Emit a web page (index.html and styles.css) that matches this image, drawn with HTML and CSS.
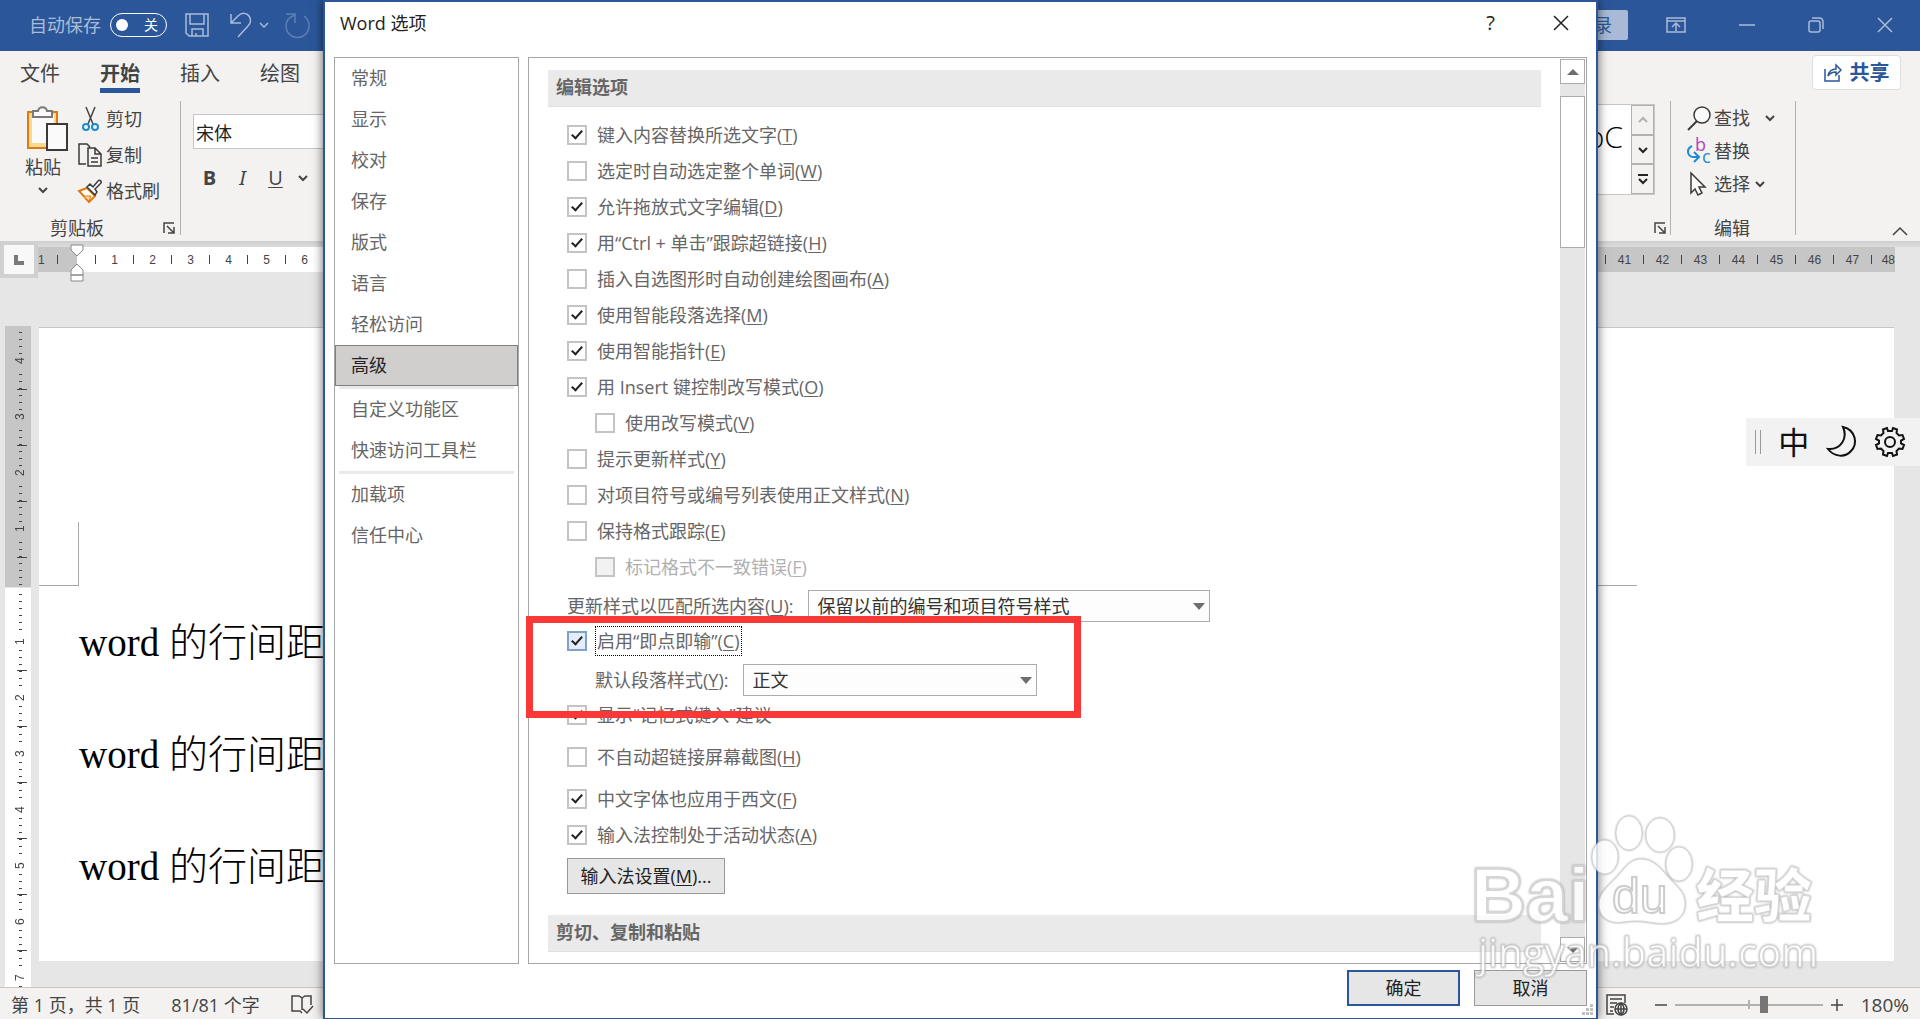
FILE: index.html
```html
<!DOCTYPE html>
<html lang="zh-CN">
	<head>
		<meta charset="utf-8">
		<title>Word 选项</title>
		<link rel="stylesheet" href="styles.css">
	</head>

	<body>
		<!-- title bar -->
		<header class="titlebar">
			<div class="quickAccess">
				<span>自动保存</span>
				<button class="toggle" type="button"><i></i>关</button>
				<button type="button" class="save" aria-label="保存">
					<svg width="24" height="24" viewBox="0 0 24 24"><path d="M1 1h22v22H4l-3-3zM5 1v10h14V1M7 23v-7h11v7M11 23v-3"/></svg>
				</button>
				<button type="button" aria-label="撤消">
					<svg width="24" height="26" viewBox="0 0 24 26"><path d="M2 2v9h10M2 11l7-7c4-4 9-3 11 0 2 3 2 7-1 10L9 25"/></svg>
				</button>
				<svg width="10" height="8" viewBox="0 0 10 8"><path d="M1 2l4 4 4-4"/></svg>
				<button type="button" class="redo" aria-label="恢复">
					<svg width="26" height="26" viewBox="0 0 26 26"><path d="M1 2h9v9M10 3C4 5 1 9 1 14a11.500 11.500 0 0 0 23 0c0-4-2-8-5-10"/></svg>
				</button>
			</div>
			<div class="windowButtons">
				<button type="button" class="login">登录</button>
				<button type="button" aria-label="功能区显示选项"><svg width="20" height="16" viewBox="0 0 20 16"><path d="M1 1h18v14H1zM1 4h18M10 14V7M6 10l4-4 4 4"/></svg></button>
				<button type="button" aria-label="最小化"><svg width="16" height="16" viewBox="0 0 16 16"><path d="M0 8h16"/></svg></button>
				<button type="button" aria-label="还原"><svg width="16" height="16" viewBox="0 0 16 16"><path d="M3 4h7q2 0 2 2v7q0 2-2 2H3q-2 0-2-2V6q0-2 2-2zM4 1h7q4 0 4 4v7"/></svg></button>
				<button type="button" aria-label="关闭"><svg width="16" height="16" viewBox="0 0 16 16"><path d="M1 1l14 14M15 1L1 15"/></svg></button>
			</div>
		</header>

		<!-- ribbon -->
		<section class="ribbon">
			<nav class="tabs">
				<a href="#">文件</a>
				<a href="#" class="active">开始</a>
				<a href="#">插入</a>
				<a href="#">绘图</a>
				<button type="button" class="share">
					<svg width="18" height="18" viewBox="0 0 18 18"><path d="M1 5v12h14v-6M4 12c1-5 4-7 8-7V1l5 5-5 5V8c-4 0-6 1-8 4z"/></svg>共享
				</button>
			</nav>
			<div class="groups">
				<div class="group clipboard">
					<div class="groupBody">
						<button type="button" class="paste">
							<svg width="42" height="48" viewBox="0 0 42 48">
								<path d="M2 6h29v36H2z" fill="#f8d990" stroke="#e07a10" stroke-width="2"/>
								<path d="M6 9h22v28H6z" fill="#fafafa" stroke="none"/>
								<path d="M7 11V5h5c1-5 8-5 9 0h5v6z" fill="#fafafa" stroke="#7a7a78" stroke-width="2"/>
								<path d="M21 18h20v26H21z" fill="#fafafa" stroke="#3b3a39" stroke-width="2"/>
							</svg>
							<span>粘贴</span>
							<svg class="chevron" width="10" height="8" viewBox="0 0 10 8"><path d="M1 2l4 4 4-4"/></svg>
						</button>
						<div class="commands">
							<button type="button">
								<svg width="24" height="26" viewBox="0 0 24 26"><path d="M8 1l7 17M17 1L10 18" stroke="#444" stroke-width="1.500"/><circle cx="8" cy="21" r="3" stroke="#1e8bcd" stroke-width="2"/><circle cx="17" cy="21" r="3" stroke="#1e8bcd" stroke-width="2"/></svg>剪切
							</button>
							<button type="button">
								<svg width="24" height="24" viewBox="0 0 24 24"><path d="M8 21H1V1h8l3 3M10 5h7l6 6v12H10zM17 5v6h6M13 15h7M13 19h7" stroke="#3b3a39" stroke-width="1.500"/></svg>复制
							</button>
							<button type="button">
								<svg width="24" height="24" viewBox="0 0 24 24"><path d="M1 12l8-3 8 8-6 6z" fill="#fff" stroke="#e07a10" stroke-width="2"/><path d="M5 17l8 0-2 5z" fill="#f8d990" stroke="#e07a10" stroke-width="1"/><path d="M9 8l3-3 3 3 5-6c2-2 4 1 3 2l-6 6 2 3-2 3z" fill="#fafafa" stroke="#3b3a39" stroke-width="1.500"/></svg>格式刷
							</button>
						</div>
					</div>
					<div class="groupLabel">
						<span>剪贴板</span>
						<svg class="launcher" width="12" height="12" viewBox="0 0 12 12"><path d="M1 11V1h10M4 4l7 7M11 5v6H5"/></svg>
					</div>
				</div>
				<div class="group font">
					<input type="text" value="宋体" aria-label="字体">
					<div class="fontRow">
						<button type="button"><b>B</b></button>
						<button type="button"><i>I</i></button>
						<button type="button"><u>U</u></button>
						<svg class="chevron" width="10" height="8" viewBox="0 0 10 8"><path d="M1 2l4 4 4-4"/></svg>
					</div>
				</div>
				<div class="group styles">
					<div class="gallery">
						<span>AaBbC</span>
						<div class="galleryButtons">
							<button type="button" class="off" aria-label="上"><svg width="10" height="8" viewBox="0 0 10 8"><path d="M1 6l4-4 4 4"/></svg></button>
							<button type="button" aria-label="下"><svg width="10" height="8" viewBox="0 0 10 8"><path d="M1 2l4 4 4-4"/></svg></button>
							<button type="button" aria-label="其他"><svg width="12" height="12" viewBox="0 0 12 12"><path d="M1 2h10M2 6l4 4 4-4"/></svg></button>
						</div>
					</div>
					<div class="groupLabel">
						<svg class="launcher" width="12" height="12" viewBox="0 0 12 12"><path d="M1 11V1h10M4 4l7 7M11 5v6H5"/></svg>
					</div>
				</div>
				<div class="group editing">
					<div class="commands">
						<button type="button" class="find">
							<svg width="24" height="24" viewBox="0 0 24 24"><circle cx="15" cy="9" r="8" fill="#fafafa" stroke="#3b3a39" stroke-width="1.500"/><path d="M10 15l-9 9" stroke="#3b3a39" stroke-width="2"/></svg>查找
							<svg class="chevron" width="10" height="8" viewBox="0 0 10 8"><path d="M1 2l4 4 4-4"/></svg>
						</button>
						<button type="button">
							<svg width="24" height="26" viewBox="0 0 24 26"><path d="M5 8C-1 11 0 18 6 19h5M7 14l5 5-5 5" stroke="#1e8bcd" stroke-width="2"/><text x="8" y="13" fill="#b146c2">b</text><text x="15" y="25" fill="#1e8bcd">c</text></svg>替换
						</button>
						<button type="button" class="select">
							<svg width="24" height="24" viewBox="0 0 24 24"><path d="M4 1v20l4-4 3 6 4-2-3-6h6z" fill="#fafafa" stroke="#3b3a39" stroke-width="1.500"/></svg>选择
							<svg class="chevron" width="10" height="8" viewBox="0 0 10 8"><path d="M1 2l4 4 4-4"/></svg>
						</button>
					</div>
					<div class="groupLabel"><span>编辑</span></div>
				</div>
				<div class="collapse">
					<svg width="16" height="10" viewBox="0 0 16 10"><path d="M1 9l7-7 7 7"/></svg>
				</div>
			</div>
		</section>

		<!-- document area -->
		<main class="workspace">
			<div class="rulerRow">
				<div class="tabStop"><svg width="10" height="10" viewBox="0 0 10 10"><path d="M2 0v8h8" stroke="#7a7a7a" stroke-width="4"/></svg></div>
				<div class="ruler">
					<div class="rulerMargin"><span>1</span><i></i></div>
					<svg class="indent" width="14" height="38" viewBox="0 0 14 38"><path d="M1 1h12v5l-6 6-6-6zM1 37v-6h12v6zM1 31v-5l6-6 6 6v5z"/></svg>
					<div class="rulerCells"><i></i><span>1</span><i></i><span>2</span><i></i><span>3</span><i></i><span>4</span><i></i><span>5</span><i></i><span>6</span><i></i></div>
					<div class="rulerCells right"><i></i><span>41</span><i></i><span>42</span><i></i><span>43</span><i></i><span>44</span><i></i><span>45</span><i></i><span>46</span><i></i><span>47</span><i></i><span>48</span></div>
				</div>
			</div>
			<div class="sheetRow">
				<div class="vruler">
					<div class="vMargin"><span>4</span><span>3</span><span>2</span><span>1</span></div>
					<div class="vBody"><span>1</span><span>2</span><span>3</span><span>4</span><span>5</span><span>6</span><span>7</span></div>
				</div>
				<article class="sheet">
					<div class="corners"><i class="cornerLeft"></i><i class="cornerRight"></i></div>
					<p>word 的行间距</p>
					<p>word 的行间距</p>
					<p>word 的行间距</p>
				</article>
			</div>
		</main>

		<footer class="statusbar">
			<span>第 1 页，共 1 页</span>
			<span>81/81 个字</span>
			<svg width="22" height="22" viewBox="0 0 22 22"><path d="M11 19l-2-2H1V2h7l3 2v12M11 4l3-2h6v9M12 15l4 4 6-7"/></svg>
			<div class="zoom">
				<svg width="22" height="22" viewBox="0 0 22 22"><path d="M8 20H1V1h18v8M4 5h12M4 9h7M4 13h4M4 17h3"/><circle cx="15" cy="15" r="6"/><path d="M9 15h12M15 9v12M15 9c-4 3-4 9 0 12M15 9c4 3 4 9 0 12"/></svg>
				<button type="button" aria-label="缩小"><svg width="12" height="12" viewBox="0 0 12 12"><path d="M0 6h12"/></svg></button>
				<input type="range" min="0" max="100" value="61" aria-label="显示比例">
				<button type="button" aria-label="放大"><svg width="12" height="12" viewBox="0 0 12 12"><path d="M0 6h12M6 0v12"/></svg></button>
				<span class="percent">180%</span>
			</div>
		</footer>

		<!-- options dialog -->
		<div class="dialog" role="dialog" aria-labelledby="dialogTitle">
			<div class="dialogTitle">
				<h1 id="dialogTitle">Word 选项</h1>
				<button type="button" class="help">?</button>
				<button type="button" aria-label="关闭"><svg width="16" height="16" viewBox="0 0 16 16"><path d="M1 1l14 14M15 1L1 15"/></svg></button>
			</div>
			<div class="dialogBody">
				<nav class="categories">
					<a href="#">常规</a>
					<a href="#">显示</a>
					<a href="#">校对</a>
					<a href="#">保存</a>
					<a href="#">版式</a>
					<a href="#">语言</a>
					<a href="#">轻松访问</a>
					<a href="#" class="active">高级</a>
					<hr>
					<a href="#">自定义功能区</a>
					<a href="#">快速访问工具栏</a>
					<hr>
					<a href="#">加载项</a>
					<a href="#">信任中心</a>
				</nav>
				<div class="panel">
					<form class="options">
						<h2>编辑选项</h2>
						<div class="rows">
							<label class="check"><input type="checkbox" checked><span>键入内容替换所选文字(<u>T</u>)</span></label>
							<label class="check"><input type="checkbox"><span>选定时自动选定整个单词(<u>W</u>)</span></label>
							<label class="check"><input type="checkbox" checked><span>允许拖放式文字编辑(<u>D</u>)</span></label>
							<label class="check"><input type="checkbox" checked><span>用“Ctrl + 单击”跟踪超链接(<u>H</u>)</span></label>
							<label class="check"><input type="checkbox"><span>插入自选图形时自动创建绘图画布(<u>A</u>)</span></label>
							<label class="check"><input type="checkbox" checked><span>使用智能段落选择(<u>M</u>)</span></label>
							<label class="check"><input type="checkbox" checked><span>使用智能指针(<u>E</u>)</span></label>
							<label class="check"><input type="checkbox" checked><span>用 Insert 键控制改写模式(<u>O</u>)</span></label>
							<label class="check sub"><input type="checkbox"><span>使用改写模式(<u>V</u>)</span></label>
							<label class="check"><input type="checkbox"><span>提示更新样式(<u>Y</u>)</span></label>
							<label class="check"><input type="checkbox"><span>对项目符号或编号列表使用正文样式(<u>N</u>)</span></label>
							<label class="check"><input type="checkbox"><span>保持格式跟踪(<u>E</u>)</span></label>
							<label class="check sub"><input type="checkbox" disabled><span>标记格式不一致错误(<u>F</u>)</span></label>
							<div class="field">
								<label for="updateStyle">更新样式以匹配所选内容(<u>U</u>):</label>
								<div class="dropdown wide"><select id="updateStyle"><option>保留以前的编号和项目符号样式</option></select></div>
							</div>
							<div class="highlight">
								<label class="check focused"><input type="checkbox" checked><span>启用“即点即输”(<u>C</u>)</span></label>
								<div class="field sub">
									<label for="defaultStyle">默认段落样式(<u>Y</u>):</label>
									<div class="dropdown"><select id="defaultStyle"><option>正文</option></select></div>
								</div>
							</div>
							<label class="check spaced"><input type="checkbox" checked><span>显示“记忆式键入”建议</span></label>
							<label class="check spaced"><input type="checkbox"><span>不自动超链接屏幕截图(<u>H</u>)</span></label>
							<label class="check"><input type="checkbox" checked><span>中文字体也应用于西文(<u>F</u>)</span></label>
							<label class="check"><input type="checkbox" checked><span>输入法控制处于活动状态(<u>A</u>)</span></label>
							<button type="button" class="button ime">输入法设置(<u>M</u>)...</button>
						</div>
						<h2>剪切、复制和粘贴</h2>
					</form>
					<div class="scrollbar">
						<button type="button" class="up" aria-label="向上滚动"></button>
						<div class="thumb"></div>
						<button type="button" class="down" aria-label="向下滚动"></button>
					</div>
				</div>
			</div>
			<div class="dialogFooter">
				<button type="button" class="button primary">确定</button>
				<button type="button" class="button">取消</button>
				<svg class="grip" width="12" height="12" viewBox="0 0 12 12"><path d="M8 0h3v3H8zM4 4h3v3H4zM8 4h3v3H8zM0 8h3v3H0zM4 8h3v3H4zM8 8h3v3H8z"/></svg>
			</div>
		</div>

		<!-- floating input method bar -->
		<div class="imeBar">
			<i></i>
			<span>中</span>
			<svg width="30" height="32" viewBox="0 0 30 32"><path d="M16 1c13 3 15 17 8 24-6 7-17 6-23-2 13 1 20-11 15-22z"/></svg>
			<svg width="32" height="32" viewBox="0 0 32 32"><circle cx="16" cy="16" r="5"/><path d="M13 2l1 3h4l1-3 4 1.500-.5 3.500 2.500 2.500 3.500-.5 1.500 4-3 1.500v3l3 1.500-1.500 4-3.500-.5-2.500 2.500.5 3.500-4 1.500-1-3h-4l-1 3-4-1.500.5-3.500L7 22.500 3.500 23 2 19l3-1.500v-3L2 13l1.500-4 3.500.5L9.500 7 9 3.500z"/></svg>
		</div>

		<svg class="watermark" width="360" height="180" viewBox="0 0 360 180">
			<ellipse cx="135" cy="47" rx="13" ry="17"/>
			<ellipse cx="159" cy="23" rx="13" ry="17"/>
			<ellipse cx="190" cy="25" rx="14" ry="17"/>
			<ellipse cx="209" cy="54" rx="13" ry="17"/>
			<path d="M171 49c-12 0-18 12-26 20s-16 15-16 25c0 15 12 20 24 18 14-2 20-1 32 1 16 2 30-3 30-20 0-11-9-17-16-25s-15-19-28-19z"/>
			<text class="bai" x="1" y="111">Bai</text>
			<text class="du" x="142" y="103">du</text>
			<text class="jing" x="226" y="107">经验</text>
			<text class="url" x="8" y="157">jingyan.baidu.com</text>
		</svg>
	</body>
</html>
```
FILE: styles.css
```css
*, *::before, *::after
{
	box-sizing: border-box;
}

body
{
	margin: 0;
	height: 100vh;
	display: flex;
	flex-direction: column;
	position: relative;
	overflow: hidden;
	font-family: "Open Sans", "Noto Sans CJK SC", sans-serif;
	font-size: 18px;
	line-height: 24px;
	color: #444444;
	background-color: #e6e6e6;
}

button
{
	font: inherit;
	color: inherit;
	background: none;
	border: 0;
	padding: 0;
	display: flex;
	align-items: center;
	justify-content: center;
}

a
{
	color: inherit;
	text-decoration: none;
}

svg
{
	fill: none;
	stroke: currentColor;
	stroke-width: 1.5;
	flex: none;
	overflow: visible;
}

u
{
	text-underline-offset: 2px;
	text-decoration-thickness: 1px;
}

.chevron
{
	stroke-width: 2;
}

/* title bar */

.titlebar
{
	height: 51px;
	flex: none;
	display: flex;
	justify-content: space-between;
	background-color: #2b579a;
	color: #aabcd7;
}

.quickAccess
{
	display: flex;
	align-items: center;
	padding: 0 0 2px 29px;
}

.toggle
{
	width: 57px;
	height: 24px;
	margin: 0 18px 0 9px;
	padding: 0 8px 0 5px;
	border: 1px solid #ffffff;
	border-radius: 12px;
	color: #ffffff;
	font-size: 14px;
	justify-content: space-between;
}

.toggle i
{
	width: 12px;
	height: 12px;
	border-radius: 50%;
	background-color: #ffffff;
}

.save
{
	margin-right: 20px;
}

.quickAccess button + svg
{
	margin: 0 16px 0 6px;
}

.redo
{
	color: #5b80b6;
}

.windowButtons
{
	display: flex;
	align-items: center;
	padding: 0 27px 2px 0;
}

.windowButtons button
{
	margin-left: 53px;
}

.windowButtons .login
{
	height: 30px;
	padding: 0 16px;
	border-radius: 2px;
	background-color: #a8bad6;
	color: #2b579a;
}

.windowButtons .login + button
{
	margin-left: 38px;
}

/* ribbon */

.ribbon
{
	height: 190px;
	flex: none;
	background-color: #f3f2f1;
}

.tabs
{
	height: 50px;
	display: flex;
	align-items: flex-start;
	padding: 4px 19px 0 20px;
	gap: 40px;
	font-size: 20px;
}

.tabs a
{
	height: 38px;
	line-height: 37px;
}

.tabs .active
{
	font-weight: bold;
	border-bottom: 5px solid #2b579a;
}

.share
{
	width: 89px;
	height: 35px;
	margin-left: auto;
	gap: 8px;
	border: 1px solid #e1dfdd;
	border-radius: 4px;
	background-color: #ffffff;
	color: #2b579a;
	font-weight: bold;
}

.groups
{
	height: 140px;
	display: flex;
}

.group
{
	display: flex;
	flex-direction: column;
	justify-content: space-between;
	background: linear-gradient(#b3b0ad, #b3b0ad) right top / 1px 134px no-repeat;
}

.clipboard
{
	width: 181px;
}

.groupBody
{
	display: flex;
	gap: 9px;
	padding-left: 25px;
}

.paste
{
	flex-direction: column;
	justify-content: flex-start;
	padding-top: 5px;
	width: 44px;
}

.paste span
{
	margin: 1px 8px 7px 0;
}

.paste .chevron
{
	margin-right: 8px;
}

.commands
{
	display: flex;
	flex-direction: column;
	align-items: flex-start;
}

.commands button
{
	height: 36px;
	gap: 4px;
}

.groupLabel
{
	height: 26px;
	display: flex;
	align-items: center;
	justify-content: flex-end;
}

.clipboard .groupLabel
{
	padding: 0 6px 0 50px;
	justify-content: space-between;
}

.font
{
	flex: 1;
	justify-content: flex-start;
	background: none;
	padding: 13px 0 0 12px;
}

.font input
{
	width: 200px;
	height: 35px;
	padding: 0 2px;
	border: 1px solid #c8c6c4;
	background-color: #ffffff;
	color: #222222;
	font: inherit;
}

.fontRow
{
	display: flex;
	align-items: center;
	gap: 20px;
	padding: 17px 0 0 10px;
}

.fontRow button
{
	width: 13px;
	font-size: 20px;
}

.fontRow i
{
	font-family: "Noto Sans", sans-serif;
}

.fontRow .chevron
{
	margin-left: -4px;
}

.styles
{
	width: 181px;
}

.gallery
{
	display: flex;
	height: 91px;
	margin: 3px 16px 0 0;
	border: 1px solid #c8c6c4;
	background-color: #ffffff;
}

.gallery span
{
	flex: 1;
	padding: 20px 8px 0 0;
	text-align: right;
	font-family: "Open Sans", sans-serif;
	font-size: 30px;
	font-weight: 300;
	color: #000000;
}

.galleryButtons
{
	width: 23px;
	display: flex;
	flex-direction: column;
}

.galleryButtons button
{
	flex: 1;
	border: 1px solid #b3b0ad;
	background-color: #f3f2f1;
	color: #222222;
}

.galleryButtons svg
{
	stroke-width: 2;
}

.galleryButtons .off
{
	color: #b3b0ad;
}

.styles .groupLabel
{
	padding-right: 5px;
}

.editing
{
	width: 125px;
	padding-left: 16px;
}

.editing .commands button
{
	height: 33px;
	gap: 3px;
}

.editing text
{
	font-size: 18px;
	stroke: none;
}

.find .chevron
{
	margin-left: 12px;
}

.select .chevron
{
	margin-left: 2px;
}

.editing .groupLabel
{
	justify-content: flex-start;
	padding-left: 27px;
}

.collapse
{
	width: 124px;
	display: flex;
	align-items: flex-end;
	justify-content: flex-end;
	padding: 0 12px 5px 0;
}

/* document area */

.workspace
{
	flex: 1;
	min-height: 0;
	display: flex;
	flex-direction: column;
	background: linear-gradient(#cfcfcf, #dcdcdc) top / 100% 6px no-repeat;
}

.rulerRow
{
	display: flex;
	flex: none;
	height: 85px;
}

.tabStop
{
	width: 38px;
	height: 37px;
	display: flex;
	align-items: center;
	justify-content: center;
	border: 4px solid #d0d0d0;
	background-color: #f8f8f8;
}

.ruler
{
	flex: 1;
	height: 25px;
	display: flex;
	margin: 6px 25px 0 0;
	background-color: #ffffff;
	font-family: "Liberation Sans", sans-serif;
	font-size: 12px;
	line-height: 26px;
}

.rulerMargin, .rulerCells
{
	display: flex;
	align-items: center;
}

.rulerMargin
{
	width: 39px;
	background-color: #c6c6c6;
}

.rulerMargin span
{
	width: 10px;
}

.rulerMargin i
{
	margin-left: 9px;
}

.ruler i
{
	width: 1px;
	height: 9px;
	background-color: #444444;
}

.indent
{
	margin: -3px -7px 0;
	stroke: #888888;
	stroke-width: 1;
	fill: #ffffff;
}

.rulerCells
{
	padding-left: 18px;
}

.rulerCells span
{
	width: 37px;
	text-align: center;
}

.rulerCells.right
{
	flex: 1;
	justify-content: flex-end;
	padding: 0;
	margin-left: 300px;
	background-color: #c6c6c6;
}

.rulerCells.right span:last-child
{
	width: 23px;
	text-align: right;
}

.sheetRow
{
	flex: 1;
	min-height: 0;
	display: flex;
	gap: 8px;
	padding: 0 26px 0 5px;
}

.vruler
{
	width: 26px;
	display: flex;
	flex-direction: column;
	overflow: hidden;
	font-family: "Liberation Sans", sans-serif;
	font-size: 12px;
	line-height: 14px;
}

/* short tick every 7px */
.vMargin, .vBody
{
	flex: none;
	background-color: #ffffff;
	background-image: repeating-linear-gradient(transparent 0 6px, #444444 6px 7px);
	background-repeat: no-repeat;
	background-size: 3px 100%;
	background-position: 14px 0;
}

.vruler span
{
	display: block;
	position: relative;
	height: 14px;
	margin: 0 4px 42px 8px;
	line-height: 14px;
	text-align: center;
	writing-mode: vertical-rl;
	transform: rotate(180deg);
	background-color: inherit;
}

/* long tick halfway between two numbers */
.vruler span::after
{
	content: "";
	position: absolute;
	left: 0;
	top: -22px;
	width: 10px;
	height: 1px;
	background-color: #444444;
}

.vMargin
{
	height: 261px;
	padding-top: 28px;
	background-color: #c6c6c6;
}

.vBody
{
	padding-top: 47px;
	margin-top: 1px;
}

.sheet
{
	flex: 1;
	margin: 1px 0 26px;
	border-top: 1px solid #c6c6c6;
	background-color: #ffffff;
	overflow: hidden;
}

.corners
{
	display: flex;
	justify-content: space-between;
	padding: 194px 0 1px;
}

.cornerLeft, .cornerRight
{
	width: 40px;
	height: 64px;
	border-bottom: 1px solid #a6a6a6;
}

.cornerLeft
{
	border-right: 1px solid #a6a6a6;
}

.cornerRight
{
	margin-right: 257px;
}

.sheet p
{
	margin: 0;
	padding-left: 40px;
	font-family: "Liberation Serif", "Noto Sans CJK SC", serif;
	font-size: 39px;
	font-weight: 300;
	line-height: 112px;
	color: #000000;
}

/* status bar */

.statusbar
{
	height: 32px;
	flex: none;
	display: flex;
	align-items: center;
	gap: 31px;
	padding: 2px 11px 0;
	border-top: 1px solid #c8c6c4;
	background-color: #f3f2f1;
}

.zoom
{
	display: flex;
	align-items: center;
	margin-left: auto;
}

.zoom button
{
	margin: 0 8px;
}

.zoom svg + button
{
	margin-left: 27px;
}

.zoom input
{
	appearance: none;
	width: 148px;
	height: 18px;
	margin: 0;
	background:
		linear-gradient(#b3b0ad, #b3b0ad) center / 100% 2px no-repeat,
		linear-gradient(#b3b0ad, #b3b0ad) center / 2px 9px no-repeat;
}

.zoom input::-webkit-slider-thumb
{
	appearance: none;
	width: 8px;
	height: 17px;
	background-color: #767676;
}

.percent
{
	margin-left: 10px;
	font-size: 19px;
}

/* options dialog */

.dialog
{
	position: absolute;
	inset: 0 322px 0 323px;
	display: flex;
	flex-direction: column;
	border: 2px solid #2b579a;
	border-bottom-width: 1px;
	background-color: #ffffff;
	box-shadow: 0 0 10px rgba(0, 0, 0, 0.6);
	color: #666666;
}

.dialogTitle
{
	height: 55px;
	flex: none;
	display: flex;
	align-items: center;
	padding: 0 27px 13px 15px;
	color: #222222;
}

.dialogTitle h1
{
	flex: 1;
	margin: 0;
	font-size: 18px;
	font-weight: 400;
}

.help
{
	margin-right: 58px;
	font-size: 20px;
}

.dialogBody
{
	flex: 1;
	min-height: 0;
	display: flex;
	gap: 9px;
	padding: 0 9px;
}

.categories
{
	width: 185px;
	border: 1px solid #a6a6a6;
}

.categories a
{
	display: block;
	height: 41px;
	padding-left: 16px;
	line-height: 41px;
}

.categories .active
{
	padding-left: 15px;
	line-height: 39px;
	border: 1px solid #7f7f7f;
	background-color: #d0cfce;
	color: #222222;
}

.categories hr
{
	height: 3px;
	margin: 0 4px;
	border: 0;
	background-color: #e9e9e9;
}

.panel
{
	flex: 1;
	display: flex;
	justify-content: space-between;
	padding: 1px;
	border: 1px solid #a6a6a6;
}

.options
{
	flex: 1;
	padding: 11px 19px 0 18px;
}

.options h2
{
	height: 37px;
	margin: 0;
	padding-left: 8px;
	border-bottom: 1px solid #e0e0e0;
	background-color: #eaeaea;
	color: #666666;
	font-size: 18px;
	font-weight: bold;
	line-height: 34px;
}

.rows
{
	padding: 18px 0 21px 19px;
}

.check
{
	display: flex;
	align-items: center;
	gap: 10px;
	width: max-content;
	height: 20px;
	margin-bottom: 16px;
}

.sub
{
	margin-left: 28px;
}

.spaced
{
	margin-bottom: 22px;
}

.check input
{
	appearance: none;
	width: 20px;
	height: 20px;
	margin: 0;
	border: 2px solid #c4c4c4;
	background-color: #ffffff;
	display: flex;
	justify-content: center;
}

.check input:checked::after
{
	content: "";
	width: 6px;
	height: 11px;
	margin-top: 1px;
	border: solid #222222;
	border-width: 0 2px 2px 0;
	transform: rotate(42deg);
}

.check input:disabled
{
	background-color: #f2f2f2;
}

.check input:disabled + span
{
	color: #b0b0b0;
}

.field
{
	display: flex;
	align-items: center;
	gap: 15px;
	height: 32px;
	margin-top: -3px;
	margin-bottom: 9px;
}

.dropdown
{
	position: relative;
	width: 294px;
}

.wide
{
	width: 402px;
}

.dropdown select
{
	appearance: none;
	display: block;
	width: 100%;
	height: 32px;
	padding: 0 8px;
	border: 1px solid #ababab;
	border-radius: 0;
	background-color: #fdfdfd;
	color: #333333;
	font: inherit;
}

.dropdown::after
{
	content: "";
	position: absolute;
	right: 5px;
	top: 13px;
	border: 6px solid transparent;
	border-top: 7px solid #6e6e6e;
	border-bottom: 0;
}

/* red frame lies over the neighbouring rows */
.highlight
{
	position: relative;
}

.highlight::after
{
	content: "";
	position: absolute;
	left: -41px;
	top: -15px;
	width: 555px;
	height: 102px;
	border: 7px solid #fb3838;
	z-index: 1;
	pointer-events: none;
}

.focused input
{
	border-color: #7da2ce;
	background-color: #e3edfb;
}

.focused
{
	gap: 8px;
}

.focused span
{
	height: 30px;
	padding: 2px 1px;
	border: 1px dotted #000000;
}

.button
{
	width: 113px;
	height: 36px;
	border: 1px solid #999999;
	background-color: #e6e6e6;
	color: #222222;
}

.ime
{
	width: 158px;
	margin-top: -3px;
}

.primary
{
	border: 2px solid #2b579a;
}

.scrollbar
{
	width: 25px;
	display: flex;
	flex-direction: column;
	background-color: #e6e6e6;
}

.scrollbar button, .thumb
{
	border: 1px solid #ababab;
	background-color: #ffffff;
}

.scrollbar button
{
	height: 25px;
}

.thumb
{
	height: 152px;
	margin: 12px 0 auto;
}

.up::after, .down::after
{
	content: "";
	border: 6px solid transparent;
}

.up::after
{
	border-bottom-color: #6e6e6e;
	border-top: 0;
}

.down::after
{
	border-top-color: #6e6e6e;
	border-bottom: 0;
}

.dialogFooter
{
	position: relative;
	flex: none;
	display: flex;
	justify-content: flex-end;
	gap: 14px;
	padding: 6px 9px 12px;
}

.grip
{
	position: absolute;
	right: 2px;
	bottom: 2px;
	fill: #c0c0c0;
	stroke: none;
}

/* floating input method bar */

.imeBar
{
	position: absolute;
	top: 418px;
	right: 0;
	width: 174px;
	height: 48px;
	display: flex;
	align-items: center;
	justify-content: space-between;
	padding: 0 14px 0 9px;
	background-color: #f2f2f2;
	color: #111111;
}

.imeBar i
{
	width: 6px;
	height: 24px;
	border: solid #999999;
	border-width: 0 1px;
}

.imeBar span
{
	font-size: 31px;
}

.imeBar svg
{
	stroke-width: 2;
}

/* watermark */

.watermark
{
	position: absolute;
	right: 90px;
	bottom: 29px;
	fill: #ffffff;
	stroke: #cccccc;
	stroke-width: 1;
	opacity: 0.8;
	filter: drop-shadow(0 0 1px #888888);
	pointer-events: none;
}

.bai
{
	font: bold 76px "Liberation Sans", sans-serif;
	stroke-width: 2;
}

.du
{
	font: 50px "Liberation Sans", sans-serif;
	stroke: #c0c0c0;
	stroke-width: 2;
}

.jing
{
	font: 900 58px "Noto Sans CJK SC", sans-serif;
}

.url
{
	font: 40px "Open Sans", sans-serif;
}
```
